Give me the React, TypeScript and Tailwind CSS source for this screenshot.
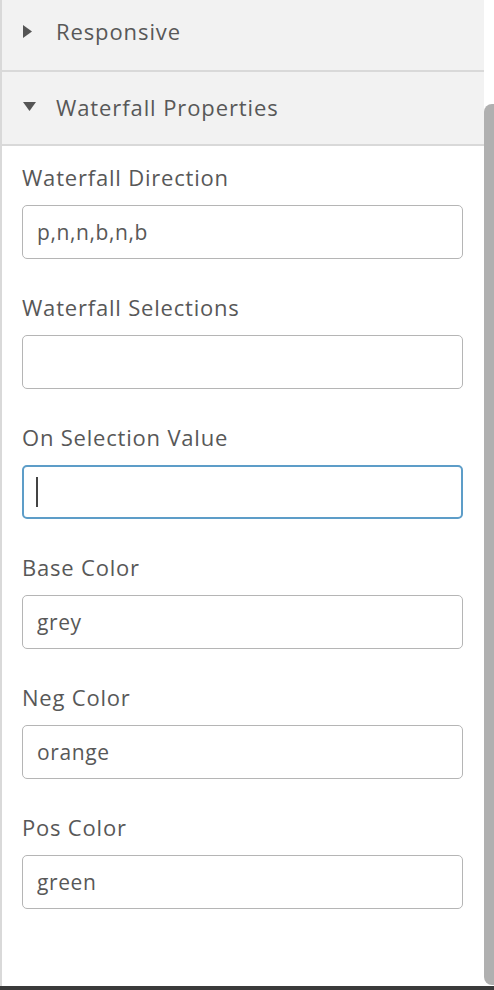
import React from "react";

const fields = [
  { label: "Waterfall Direction", value: "p,n,n,b,n,b" },
  { label: "Waterfall Selections", value: "" },
  { label: "On Selection Value", value: "", focused: true },
  { label: "Base Color", value: "grey" },
  { label: "Neg Color", value: "orange" },
  { label: "Pos Color", value: "green" },
];

const FONT = "'Open Sans', Lato, sans-serif";

const SectionHeader = ({ title, open }: { title: string; open?: boolean }) => (
  <div
    className={`flex items-center bg-[#f2f2f2] border-b-2 border-[#d9d9d9] pl-[21px] ${
      open ? "h-[74px] pb-[2px]" : "h-[72px] pb-[8px]"
    }`}
  >
    <span className="w-[33px] flex items-center">
      {open ? (
        <svg width="13" height="10" viewBox="0 0 13 10">
          <polygon points="0,0 13,0 6.5,9" fill="#555" />
        </svg>
      ) : (
        <svg width="10" height="13" viewBox="0 0 10 13">
          <polygon points="0,0 9,6.5 0,13" fill="#555" />
        </svg>
      )}
    </span>
    <span className="text-[22px] text-[#585858] tracking-[0.9px]">{title}</span>
  </div>
);

export default function App() {
  return (
    <div
      className="flex flex-col h-[990px] w-[494px] bg-white overflow-hidden"
      style={{ fontFamily: FONT }}
    >
      <div className="flex flex-1 min-h-0">
        <div className="flex-1 border-l-2 border-[#d9d9d9] flex flex-col">
          <SectionHeader title="Responsive" />
          <SectionHeader title="Waterfall Properties" open />
          <div className="flex flex-col pl-[20px] pr-[21px] pt-[18px]">
            {fields.map((f) => (
              <div key={f.label} className="flex flex-col mb-[35px]">
                <label className="text-[22px] leading-[26px] text-[#585858] tracking-[0.8px]">
                  {f.label}
                </label>
                <div className="relative mt-[15px]">
                  <input
                    readOnly
                    value={f.value}
                    className={`w-full h-[54px] rounded-[5px] px-[14px] text-[21px] text-[#585858] tracking-[0.6px] outline-none bg-white ${
                      f.focused ? "border-2 border-[#5d9dc8]" : "border-[1.5px] border-[#b5b5b5]"
                    }`}
                    style={{ fontFamily: FONT }}
                  />
                  {f.focused && (
                    <span className="absolute left-[14px] top-[12px] w-[2px] h-[30px] bg-[#444]" />
                  )}
                </div>
              </div>
            ))}
          </div>
        </div>
        <div className="w-[10px] flex flex-col pt-[104px] pb-[1px]">
          <div className="flex-1 bg-[#b0b0b0] rounded-l-[8px]" />
        </div>
      </div>
      <div className="h-[4px] bg-[#3a3a3a]" />
    </div>
  );
}
